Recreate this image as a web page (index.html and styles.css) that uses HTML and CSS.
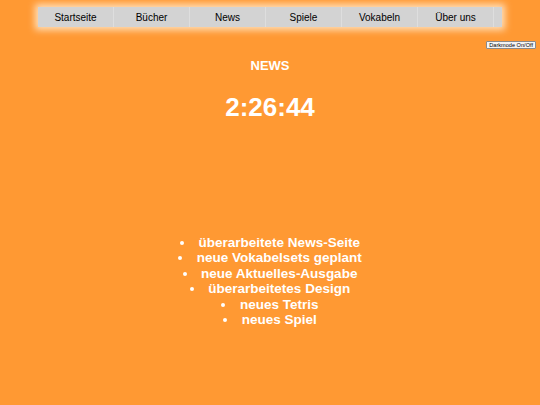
FILE: index.html
```html
<!DOCTYPE html>
<html lang="de">
<head>
<meta charset="utf-8">
<title>News</title>
<link rel="stylesheet" href="styles.css">
</head>
<body>
<nav class="nav">
  <a class="nav-item" href="#">Startseite</a>
  <a class="nav-item" href="#">Bücher</a>
  <a class="nav-item" href="#">News</a>
  <a class="nav-item" href="#">Spiele</a>
  <a class="nav-item" href="#">Vokabeln</a>
  <a class="nav-item" href="#">Über uns</a>
</nav>
<div class="toggle-row">
  <button class="toggle">Darkmode On/Off</button>
</div>
<h1 class="title">NEWS</h1>
<div class="clock">2:26:44</div>
<ul class="news">
  <li>überarbeitete News-Seite</li>
  <li>neue Vokabelsets geplant</li>
  <li>neue Aktuelles-Ausgabe</li>
  <li>überarbeitetes Design</li>
  <li>neues Tetris</li>
  <li>neues Spiel</li>
</ul>
</body>
</html>
```
FILE: styles.css
```css
html, body {
  margin: 0;
  padding: 0;
}
body {
  background: #ff9933;
  font-family: "Liberation Sans", Arial, sans-serif;
  color: #fff;
  height: 405px;
  overflow: hidden;
}
.nav {
  display: flex;
  width: 456px;
  padding-right: 8px;
  height: 20px;
  margin: 7px auto 0;
  background: #d3d3d3;
  box-shadow: 0 0 7px 3px rgba(255, 236, 210, 0.85);
}
.nav-item {
  width: 75px;
  border-right: 1px solid #dedede;
  display: flex;
  align-items: center;
  justify-content: center;
  font-size: 10px;
  color: #000;
  text-decoration: none;
}
.toggle-row {
  display: flex;
  justify-content: flex-end;
  padding-right: 4px;
  margin-top: 14px;
}
.toggle {
  font-family: "Liberation Sans", Arial, sans-serif;
  font-size: 5.6px;
  line-height: 6px;
  padding: 0 2px;
  margin: 0;
  background: #f4f4f4;
  border: 1px solid #8a8a8a;
  border-radius: 1px;
  color: #000;
}
.title {
  margin: 9px 0 0;
  text-align: center;
  font-size: 13px;
  line-height: 15px;
  font-weight: bold;
}
.clock {
  margin-top: 19px;
  text-align: center;
  font-size: 26px;
  line-height: 30px;
  font-weight: bold;
}
.news {
  list-style: disc inside;
  margin: 113px 0 0;
  padding: 0;
  text-align: center;
  font-size: 13.5px;
  line-height: 15.4px;
  font-weight: bold;
}
```
